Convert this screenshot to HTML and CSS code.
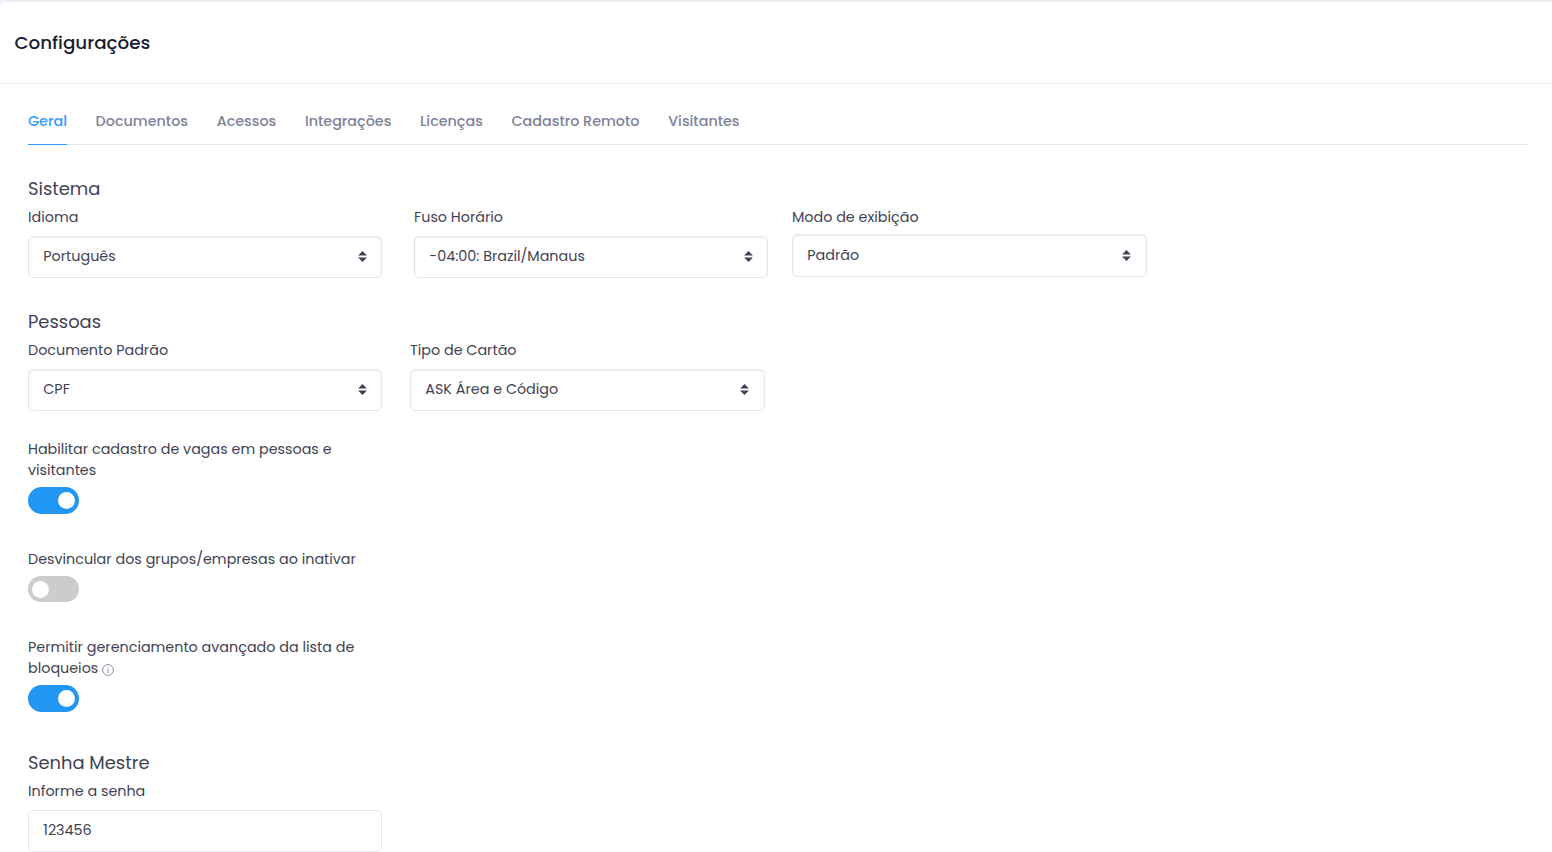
FILE: index.html
```html
<!DOCTYPE html>
<html lang="pt-br">
    <head>
        <meta charset="utf-8">
        <title>Configurações</title>
        <link rel="stylesheet" href="styles.css">
    </head>
    <body>
        <div class="card">
            <div class="card-header">
                <h3 class="card-title">Configurações</h3>
            </div>
            <div class="card-body">
                <ul class="nav">
                    <li class="active">Geral</li>
                    <li>Documentos</li>
                    <li>Acessos</li>
                    <li>Integrações</li>
                    <li>Licenças</li>
                    <li>Cadastro Remoto</li>
                    <li>Visitantes</li>
                </ul>

                <h4>Sistema</h4>
                <div class="row">
                    <div class="field">
                        <label>Idioma</label>
                        <div class="select">
                            <span>Português</span>
                            <svg class="arrows" width="9" height="11" viewBox="0 0 4 5"><path d="M2 0L0 2h4zm0 5L0 3h4z"/></svg>
                        </div>
                    </div>
                    <div class="field fuso">
                        <label>Fuso Horário</label>
                        <div class="select">
                            <span>-04:00: Brazil/Manaus</span>
                            <svg class="arrows" width="9" height="11" viewBox="0 0 4 5"><path d="M2 0L0 2h4zm0 5L0 3h4z"/></svg>
                        </div>
                    </div>
                    <div class="field modo">
                        <label>Modo de exibição</label>
                        <div class="select">
                            <span>Padrão</span>
                            <svg class="arrows" width="9" height="11" viewBox="0 0 4 5"><path d="M2 0L0 2h4zm0 5L0 3h4z"/></svg>
                        </div>
                    </div>
                </div>

                <h4>Pessoas</h4>
                <div class="row row-pessoas">
                    <div class="field">
                        <label>Documento Padrão</label>
                        <div class="select">
                            <span>CPF</span>
                            <svg class="arrows" width="9" height="11" viewBox="0 0 4 5"><path d="M2 0L0 2h4zm0 5L0 3h4z"/></svg>
                        </div>
                    </div>
                    <div class="field cartao">
                        <label>Tipo de Cartão</label>
                        <div class="select">
                            <span>ASK Área e Código</span>
                            <svg class="arrows" width="9" height="11" viewBox="0 0 4 5"><path d="M2 0L0 2h4zm0 5L0 3h4z"/></svg>
                        </div>
                    </div>
                </div>

                <div class="option">
                    <label>Habilitar cadastro de vagas em pessoas e<br>visitantes</label>
                    <div class="switch on"><span class="knob"></span></div>
                </div>
                <div class="option">
                    <label>Desvincular dos grupos/empresas ao inativar</label>
                    <div class="switch"><span class="knob"></span></div>
                </div>
                <div class="option bloqueios">
                    <label>Permitir gerenciamento avançado da lista de<br>bloqueios <svg class="info" width="12" height="12" viewBox="0 0 12 12"><circle cx="6" cy="6" r="5.4"/><path d="M6 5v4M6 3v1"/></svg></label>
                    <div class="switch on"><span class="knob"></span></div>
                </div>

                <h4>Senha Mestre</h4>
                <div class="field">
                    <label>Informe a senha</label>
                    <input class="input" type="text" value="123456">
                </div>
            </div>
        </div>
    </body>
</html>
```

FILE: styles.css
```css
*{
    box-sizing: border-box;
}
body{
    margin: 0;
    padding-top: 2px;
    height: 852px;
    overflow: hidden;
    background: #eef0f8;
    font-family: Poppins, Inter, sans-serif;
    font-size: 14.34px;
    line-height: 21px;
    color: #3f4254;
}
.card{
    height: 860px;
    background: #fff;
    border-radius: 6px 0 0 0;
}
.card-header{
    height: 82px;
    padding: 0 14.4px;
    display: flex;
    align-items: center;
    border-bottom: 1px solid #ebedf3;
}
.card-title{
    margin: 0;
    font-size: 18.3px;
    font-weight: 500;
    color: #181c32;
}
.card-body{
    padding: 19px 23px 0 28px;
}
.nav{
    display: flex;
    gap: 28.7px;
    height: 42px;
    margin: 0 0 33px;
    padding: 0;
    list-style: none;
    border-bottom: 1px solid #e4e6ef;
    font-weight: 500;
    color: #7e8299;
}
.nav li{
    height: 42px;
    padding-top: 8px;
    white-space: nowrap;
}
.nav .active{
    color: #3699ff;
    border-bottom: 1px solid #3699ff;
}
h4{
    margin: 0 0 7px;
    font-size: 17.9px;
    font-weight: 400;
    line-height: 22px;
}
.row{
    display: flex;
    height: 104px;
}
.field{
    width: 354px;
}
.fuso{
    margin-left: 32px;
}
.modo{
    width: 355px;
    margin-left: 24px;
}
.cartao{
    width: 355px;
    margin-left: 28px;
}
label{
    display: block;
    white-space: nowrap;
}
.select, .input{
    width: 100%;
    height: 42px;
    margin-top: 8px;
    padding: 0 14px 0 14.3px;
    border: 1px solid #e4e6ef;
    border-radius: 5px;
    background: #fff;
}
.select{
    display: flex;
    align-items: center;
    justify-content: space-between;
    box-shadow: inset 0 1px 2px rgba(0,0,0,0.075);
}
.select span{
    margin-top: -2px;
}
.modo .select{
    height: 43px;
    margin-top: 6px;
}
.modo .select span{
    margin-top: 0;
}
.modo .select, .cartao .select{
    padding-right: 15px;
}
.arrows{
    margin-top: -1px;
    fill: #3f4254;
}
.row-pessoas{
    height: 99px;
}
.option{
    margin-bottom: 35px;
}
.option label{
    margin-bottom: 6px;
}
.switch{
    width: 51px;
    height: 26px;
    padding: 5px 3.5px;
    border-radius: 14px;
    background: #ccc;
}
.knob{
    display: block;
    width: 17px;
    height: 17px;
    border-radius: 50%;
    background: #fff;
}
.on{
    height: 27px;
    background: #2196f3;
}
.on .knob{
    margin-left: 26.8px;
}
.bloqueios{
    margin-bottom: 40px;
}
.info{
    vertical-align: -2.5px;
    fill: none;
    stroke: #7e8299;
    stroke-width: 0.9;
}
.input{
    display: block;
    font: inherit;
    color: inherit;
    padding-bottom: 2px;
    outline: none;
}
```
